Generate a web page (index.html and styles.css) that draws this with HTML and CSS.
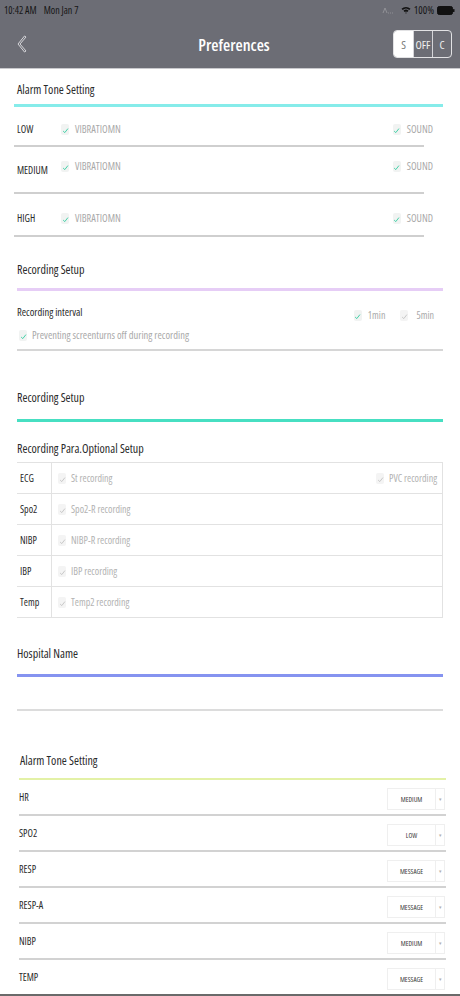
FILE: index.html
```html
<!DOCTYPE html>
<html>
<head>
<meta charset="utf-8">
<title>Preferences</title>
<link rel="stylesheet" href="styles.css">
</head>
<body>
<header class="topbar">
  <div class="status">
    <span class="time">10:42 AM</span><span class="date">Mon Jan 7</span>
    <span class="status-right">
      <svg class="activity" width="12" height="7" viewBox="0 0 12 7"><path d="M1 6 L3 1 L5 6 M6 6h1 M8 6h1 M10 6h1" fill="none" stroke="#9a9aa0" stroke-width="0.8"/></svg>
      <svg class="wifi" width="10" height="8" viewBox="0 0 10 8"><path d="M0.5 2.8 A6.5 6.5 0 0 1 9.5 2.8 L8.3 4 A4.8 4.8 0 0 0 1.7 4 Z M2.5 4.8 A3.6 3.6 0 0 1 7.5 4.8 L6.3 6 A1.9 1.9 0 0 0 3.7 6 Z M4.2 6.8 L5 7.8 L5.8 6.8 A1.2 1.2 0 0 0 4.2 6.8 Z" fill="#111"/></svg>
      <span class="pct">100%</span>
      <svg class="battery" width="18" height="9" viewBox="0 0 18 9"><rect x="0.5" y="0.5" width="15" height="8" rx="1.8" fill="#111" stroke="#111"/><rect x="16" y="3" width="1.5" height="3" rx="0.6" fill="#111"/></svg>
    </span>
  </div>
  <nav class="nav">
    <span class="back">
      <svg width="11" height="18" viewBox="0 0 11 18"><polygon points="8.5,1 2,9 8.5,17 10,16 4,9 10,2" fill="none" stroke="#d6d6da" stroke-width="1" stroke-linejoin="round"/></svg>
    </span>
    <h1 class="title">Preferences</h1>
    <div class="seg"><span class="on">S</span><span>OFF</span><span>C</span></div>
  </nav>
</header>

<main class="content">
  <section class="sec sec-alarm">
    <h2 class="sec-title t1">Alarm Tone Setting</h2>
    <div class="rule rule-cyan"></div>
    <div class="alarm-list">
      <div class="arow arow-low">
        <span class="alabel">LOW</span>
        <span class="chk"><span class="cb"><svg viewBox="0 0 8 8" width="7" height="7"><path d="M1.3 4.6 L3.2 6.4 L6.8 1.8" fill="none" stroke="currentColor" stroke-width="1.1"/></svg></span>VIBRATIOMN</span>
        <span class="chk right"><span class="cb"><svg viewBox="0 0 8 8" width="7" height="7"><path d="M1.3 4.6 L3.2 6.4 L6.8 1.8" fill="none" stroke="currentColor" stroke-width="1.1"/></svg></span>SOUND</span>
      </div>
      <div class="arow arow-med">
        <span class="alabel low-lbl">MEDIUM</span>
        <span class="chk"><span class="cb"><svg viewBox="0 0 8 8" width="7" height="7"><path d="M1.3 4.6 L3.2 6.4 L6.8 1.8" fill="none" stroke="currentColor" stroke-width="1.1"/></svg></span>VIBRATIOMN</span>
        <span class="chk right"><span class="cb"><svg viewBox="0 0 8 8" width="7" height="7"><path d="M1.3 4.6 L3.2 6.4 L6.8 1.8" fill="none" stroke="currentColor" stroke-width="1.1"/></svg></span>SOUND</span>
      </div>
      <div class="arow arow-high">
        <span class="alabel">HIGH</span>
        <span class="chk"><span class="cb"><svg viewBox="0 0 8 8" width="7" height="7"><path d="M1.3 4.6 L3.2 6.4 L6.8 1.8" fill="none" stroke="currentColor" stroke-width="1.1"/></svg></span>VIBRATIOMN</span>
        <span class="chk right"><span class="cb"><svg viewBox="0 0 8 8" width="7" height="7"><path d="M1.3 4.6 L3.2 6.4 L6.8 1.8" fill="none" stroke="currentColor" stroke-width="1.1"/></svg></span>SOUND</span>
      </div>
    </div>
  </section>

  <section class="sec sec-rec">
    <h2 class="sec-title t2">Recording Setup</h2>
    <div class="rule rule-purple"></div>
    <div class="interval">
      <div class="interval-row">
        <span class="ilabel">Recording interval</span>
        <span class="opts">
          <span class="chk opt"><span class="cb"><svg viewBox="0 0 8 8" width="7" height="7"><path d="M1.3 4.6 L3.2 6.4 L6.8 1.8" fill="none" stroke="currentColor" stroke-width="1.1"/></svg></span>1min</span>
          <span class="chk opt opt5"><span class="cb off"><svg viewBox="0 0 8 8" width="7" height="7"><path d="M1.3 4.6 L3.2 6.4 L6.8 1.8" fill="none" stroke="currentColor" stroke-width="1.1"/></svg></span>5min</span>
        </span>
      </div>
      <div class="prevent">
        <span class="chk"><span class="cb"><svg viewBox="0 0 8 8" width="7" height="7"><path d="M1.3 4.6 L3.2 6.4 L6.8 1.8" fill="none" stroke="currentColor" stroke-width="1.1"/></svg></span>Preventing screenturns off during recording</span>
      </div>
    </div>
  </section>

  <section class="sec sec-para">
    <h2 class="sec-title t3">Recording Setup</h2>
    <div class="rule rule-teal"></div>
    <h3 class="sub-title">Recording Para.Optional Setup</h3>
    <div class="ptable">
      <div class="prow">
        <span class="plabel">ECG</span>
        <span class="pcell">
          <span class="chk dis"><span class="cb off"><svg viewBox="0 0 8 8" width="7" height="7"><path d="M1.3 4.6 L3.2 6.4 L6.8 1.8" fill="none" stroke="currentColor" stroke-width="1.1"/></svg></span>St recording</span>
          <span class="chk dis right"><span class="cb off"><svg viewBox="0 0 8 8" width="7" height="7"><path d="M1.3 4.6 L3.2 6.4 L6.8 1.8" fill="none" stroke="currentColor" stroke-width="1.1"/></svg></span>PVC recording</span>
        </span>
      </div>
      <div class="prow">
        <span class="plabel">Spo2</span>
        <span class="pcell"><span class="chk dis"><span class="cb off"><svg viewBox="0 0 8 8" width="7" height="7"><path d="M1.3 4.6 L3.2 6.4 L6.8 1.8" fill="none" stroke="currentColor" stroke-width="1.1"/></svg></span>Spo2-R recording</span></span>
      </div>
      <div class="prow">
        <span class="plabel">NIBP</span>
        <span class="pcell"><span class="chk dis"><span class="cb off"><svg viewBox="0 0 8 8" width="7" height="7"><path d="M1.3 4.6 L3.2 6.4 L6.8 1.8" fill="none" stroke="currentColor" stroke-width="1.1"/></svg></span>NIBP-R recording</span></span>
      </div>
      <div class="prow">
        <span class="plabel">IBP</span>
        <span class="pcell"><span class="chk dis"><span class="cb off"><svg viewBox="0 0 8 8" width="7" height="7"><path d="M1.3 4.6 L3.2 6.4 L6.8 1.8" fill="none" stroke="currentColor" stroke-width="1.1"/></svg></span>IBP recording</span></span>
      </div>
      <div class="prow">
        <span class="plabel">Temp</span>
        <span class="pcell"><span class="chk dis"><span class="cb off"><svg viewBox="0 0 8 8" width="7" height="7"><path d="M1.3 4.6 L3.2 6.4 L6.8 1.8" fill="none" stroke="currentColor" stroke-width="1.1"/></svg></span>Temp2 recording</span></span>
      </div>
    </div>
  </section>

  <section class="sec sec-hosp">
    <h2 class="sec-title t4">Hospital Name</h2>
    <div class="rule rule-blue"></div>
    <div class="hosp-input"></div>
  </section>

  <section class="sec sec-tone">
    <h2 class="sec-title t5">Alarm Tone Setting</h2>
    <div class="rule rule-lime"></div>
    <div class="tone-list">
      <div class="trow"><span class="tlabel">HR</span><span class="sel"><span class="sel-val">MEDIUM</span><span class="sel-arrow">▾</span></span></div>
      <div class="trow"><span class="tlabel">SPO2</span><span class="sel"><span class="sel-val">LOW</span><span class="sel-arrow">▾</span></span></div>
      <div class="trow"><span class="tlabel">RESP</span><span class="sel"><span class="sel-val">MESSAGE</span><span class="sel-arrow">▾</span></span></div>
      <div class="trow"><span class="tlabel">RESP-A</span><span class="sel"><span class="sel-val">MESSAGE</span><span class="sel-arrow">▾</span></span></div>
      <div class="trow"><span class="tlabel">NIBP</span><span class="sel"><span class="sel-val">MEDIUM</span><span class="sel-arrow">▾</span></span></div>
      <div class="trow last"><span class="tlabel">TEMP</span><span class="sel"><span class="sel-val">MESSAGE</span><span class="sel-arrow">▾</span></span></div>
    </div>
  </section>
  <div class="bottom-edge"></div>
</main>
</body>
</html>
```

FILE: styles.css
```css
* { box-sizing: border-box; }

html, body {
  margin: 0;
  padding: 0;
}

body {
  width: 460px;
  height: 996px;
  overflow: hidden;
  background: #ffffff;
  color: #2a2a2a;
  font-family: "Open Sans", "Liberation Sans", sans-serif;
  font-stretch: 75%;
}

/* ---------- top bar ---------- */
.topbar {
  background: #6c6d75;
  height: 69px;
  border-bottom: 1px solid #c9c9cd;
}

.status {
  height: 20px;
  display: flex;
  align-items: center;
  padding: 0 5px 0 4px;
  font-size: 10px;
  color: #161616;
}

.date { margin-left: 7px; }

.status-right {
  margin-left: auto;
  display: flex;
  align-items: center;
  gap: 3px;
}

.activity { margin-right: 4px; }
.pct { font-size: 10.5px; }

.nav {
  height: 48px;
  display: grid;
  grid-template-columns: 1fr auto 1fr;
  align-items: center;
  padding: 0 8px 0 16px;
}

.back { display: flex; align-items: center; }

.title {
  margin: 0;
  font-size: 16.5px;
  font-weight: 600;
  color: #ffffff;
}

.seg {
  justify-self: end;
  display: flex;
  height: 28px;
  border: 1px solid #e2e2e4;
  border-radius: 4px;
  overflow: hidden;
}

.seg span {
  width: 19px;
  display: flex;
  align-items: center;
  justify-content: center;
  font-size: 11.5px;
  color: #f0f0f0;
}

.seg span + span { border-left: 1px solid #d4d4d8; }

.seg .on {
  background: #ffffff;
  color: #7a7a7a;
}

/* ---------- shared ---------- */
.sec-title {
  margin: 0;
  font-size: 12px;
  line-height: 16px;
  font-weight: normal;
  color: #2a2a2a;
  padding-left: 17px;
}

.rule { height: 3px; }

.chk {
  display: inline-flex;
  align-items: center;
  gap: 6px;
  font-size: 10.3px;
  line-height: 16px;
  color: #a9a9a9;
}

.cb {
  width: 8px;
  height: 11px;
  border-radius: 2px;
  background: #f1f3f2;
  display: inline-flex;
  align-items: flex-end;
  justify-content: center;
  padding-bottom: 1px;
  color: #3ccfa6;
  flex: none;
}

.cb.off { color: #c6c6c6; background: #f4f4f4; }

.right { margin-left: auto; }

/* ---------- section 1 ---------- */
.t1 { margin-top: 13px; }

.rule-cyan {
  margin: 6px 17px 0 14px;
  background: #86ecea;
}

.alarm-list {
  margin-left: 14px;
  width: 429px;
}

.arow {
  display: flex;
  align-items: flex-start;
  padding: 0 10px 0 3px;
  background: linear-gradient(#cfcfcf, #cfcfcf) left bottom / 410px 2px no-repeat;
}

.arow-low { height: 40px; padding-top: 14px; }
.arow-med { height: 47px; padding-top: 11px; }
.arow-high { height: 43px; padding-top: 16px; }

.alabel {
  width: 44px;
  font-size: 10px;
  line-height: 16px;
  color: #2a2a2a;
}

.low-lbl { margin-top: 4px; }

/* ---------- section 2 ---------- */
.t2 { margin-top: 25px; }

.rule-purple {
  margin: 10px 17px 0 17px;
  background: #e6cdf6;
}

.interval {
  margin: 0 17px;
  padding: 14px 9px 7px 0;
  border-bottom: 2px solid #d6d6d6;
}

.interval-row {
  display: flex;
  align-items: flex-start;
  height: 14px;
}

.ilabel {
  font-size: 10.5px;
  line-height: 14px;
  color: #2a2a2a;
}

.opts {
  margin-left: auto;
  margin-top: 2px;
  display: flex;
  gap: 15px;
}

.opt { gap: 6px; font-size: 10px; }
.opt5 { gap: 8px; }

.prevent {
  margin-top: 9px;
  padding-left: 2px;
  height: 14px;
  display: flex;
  align-items: center;
}

.prevent .chk { gap: 5px; font-size: 10.5px; }

/* ---------- section 3 ---------- */
.t3 { margin-top: 39px; }

.rule-teal {
  margin: 13px 17px 0 17px;
  background: #47dfc2;
}

.sub-title {
  margin: 19px 0 0;
  padding-left: 17px;
  font-size: 12px;
  line-height: 16px;
  font-weight: normal;
  color: #2a2a2a;
}

.ptable {
  margin: 5px 17px 0 17px;
  border-top: 1px solid #e2e2e2;
  border-right: 1px solid #e2e2e2;
}

.prow {
  display: flex;
  height: 31px;
  border-bottom: 1px solid #e2e2e2;
}

.plabel {
  width: 35px;
  padding-left: 3px;
  border-right: 1px solid #e2e2e2;
  display: flex;
  align-items: center;
  font-size: 10px;
  color: #2a2a2a;
}

.pcell {
  flex: 1;
  display: flex;
  align-items: center;
  padding: 0 5px 0 6px;
}

.chk.dis { color: #b2b2b2; font-size: 10px; gap: 5px; }

/* ---------- section 4 ---------- */
.t4 { margin-top: 28px; }

.rule-blue {
  margin: 12px 17px 0 17px;
  background: #8593f0;
}

.hosp-input {
  margin: 0 17px;
  height: 34px;
  border-bottom: 2px solid #dcdcdc;
}

/* ---------- section 5 ---------- */
.t5 { margin-top: 42px; padding-left: 20px; }

.rule-lime {
  height: 2px;
  margin: 9px 14px 0 19px;
  background: #e3f1a6;
}

.tone-list { margin: 0 14px 0 19px; }

.trow {
  height: 36px;
  display: flex;
  align-items: center;
  border-bottom: 2px solid #d2d2d2;
}

.trow.last { height: 34px; border-bottom: none; }

.tlabel {
  font-size: 10px;
  color: #2a2a2a;
}

.sel {
  margin-left: auto;
  margin-right: 1px;
  margin-top: 4px;
  width: 58px;
  height: 22px;
  border: 1px solid #efefef;
  display: flex;
}

.sel-val {
  flex: 1;
  display: flex;
  align-items: center;
  justify-content: center;
  font-size: 7px;
  color: #3a3a3a;
}

.sel-arrow {
  width: 9px;
  border-left: 1px solid #efefef;
  display: flex;
  align-items: center;
  justify-content: center;
  font-size: 5px;
  color: #b0b0b0;
}

.bottom-edge {
  height: 2px;
  background: #6a6a6a;
}
```
